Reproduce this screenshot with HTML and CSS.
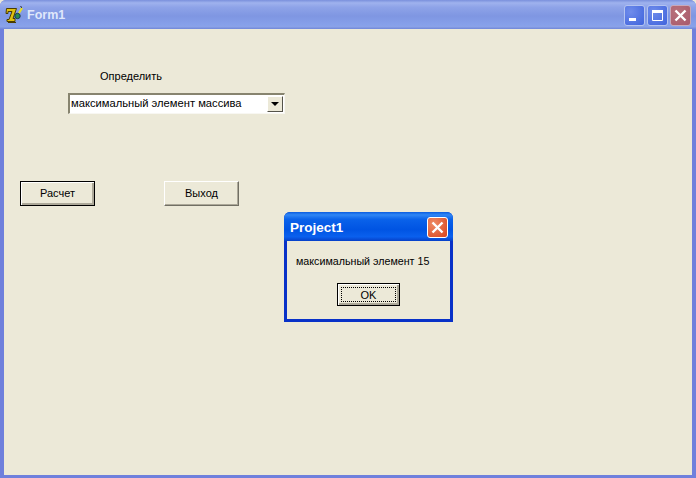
FILE: index.html
```html
<!DOCTYPE html>
<html lang="en">
<head>
  <meta charset="UTF-8">
  <title>Form1</title>
  <link rel="stylesheet" href="styles.css">
</head>
<body>

  <div class="window">
    <div class="titlebar">
      <svg class="app-icon" width="18" height="18" viewBox="0 0 18 18">
        <path d="M1.5 2.5h10l-3.500 10h2v3h-8v-2h2l3-8h-4v2h-2z" fill="#e0c010" stroke="#4a3c00" stroke-width="1"/>
        <path d="M3 16h8v1H3z" fill="#4a3c00"/>
        <circle cx="12.500" cy="10" r="2.700" fill="#2a8a50" stroke="#1c3a50" stroke-width="1"/>
        <path d="M14 7l3-5" stroke="#e8e020" stroke-width="2"/>
        <path d="M15.500 0.500l1.500 1" stroke="#101010" stroke-width="1"/>
      </svg>
      <span class="title-text">Form1</span>
      <div class="title-buttons">
        <div class="tbtn">
          <svg width="19" height="19" viewBox="0 0 19 19"><path d="M4 12h7v3H4z" fill="#fff"/></svg>
        </div>
        <div class="tbtn">
          <svg width="19" height="19" viewBox="0 0 19 19"><path d="M4.500 5.500h10v9h-10z" fill="none" stroke="#fff"/><path d="M4 4h11v3H4z" fill="#fff"/></svg>
        </div>
        <div class="tbtn tbtn-close">
          <svg width="19" height="19" viewBox="0 0 19 19"><path d="M4.500 4.500l10 10M14.500 4.500l-10 10" stroke="#fff" stroke-width="2.400"/></svg>
        </div>
      </div>
    </div>

    <div class="form">
      <div class="label">Определить</div>
      <div class="combo">
        <span class="combo-text">максимальный элемент массива</span>
        <div class="combo-arrow"><span class="arrow-down"></span></div>
      </div>
      <div class="buttons">
        <button class="btn btn-default">Расчет</button>
        <button class="btn">Выход</button>
      </div>
    </div>
  </div>

  <div class="dialog">
    <div class="dialog-title">
      <span class="dialog-title-text">Project1</span>
      <div class="dialog-close">
        <svg width="19" height="19" viewBox="0 0 19 19"><path d="M4.500 4.500l10 10M14.500 4.500l-10 10" stroke="#fff" stroke-width="2.400"/></svg>
      </div>
    </div>
    <div class="dialog-body">
      <p class="dialog-msg">максимальный элемент 15</p>
      <button class="btn-ok"><span class="ok-focus">OK</span></button>
    </div>
  </div>

</body>
</html>
```

FILE: styles.css
```css
* {
  margin: 0;
  padding: 0;
  box-sizing: border-box;
  font-family: "Liberation Sans", Arial, sans-serif;
}

body {
  width: 696px;
  height: 478px;
  overflow: hidden;
  position: relative;
  background: #ece9d8;
  font-size: 11px;
  color: #000;
}

.window {
  width: 696px;
  height: 478px;
  display: flex;
  flex-direction: column;
  background: #6f80dc;
  border-radius: 6px 6px 0 0;
  overflow: hidden;
}

.titlebar {
  height: 29px;
  flex: none;
  display: flex;
  align-items: center;
  padding: 1px 5px 0 5px;
  background: linear-gradient(180deg, #7a90dc 0%, #9fb2ee 10%, #8ea3e8 25%, #7f96e2 55%, #86a0ea 85%, #8aa2e8 92%, #6f86d8 100%);
}

.app-icon {
  flex: none;
  margin-right: 4px;
}

.title-text {
  color: #dfe7fb;
  font-size: 12.5px;
  font-weight: bold;
}

.title-buttons {
  margin-left: auto;
  display: flex;
  gap: 2px;
}

.tbtn {
  width: 21px;
  height: 21px;
  border: 1px solid #b4c3f0;
  border-radius: 3px;
  background: radial-gradient(circle at 30% 30%, #6f8ceb, #3f63dc);
  display: flex;
  align-items: center;
  justify-content: center;
}

.tbtn-close {
  background: radial-gradient(circle at 30% 30%, #b8707a, #a85a6c);
  border-color: #c8a8b8;
}

.form {
  flex: 1;
  margin: 0 4px 3px 4px;
  background: #ece9d8;
  padding-left: 16px;
}

.label {
  margin: 41px 0 0 80px;
  height: 13px;
  line-height: 13px;
}

.combo {
  margin: 10px 0 0 48px;
  width: 217px;
  height: 21px;
  display: flex;
  align-items: center;
  background: #fff;
  border-top: 2px solid #87846f;
  border-left: 2px solid #87846f;
  border-right: 1px solid #f8f7f2;
  border-bottom: 1px solid #f8f7f2;
}

.combo-text {
  flex: 1;
  padding: 0 0 2px 1px;
  font-size: 11.2px;
}

.combo-arrow {
  width: 16px;
  height: 16px;
  margin-right: 1px;
  background: #ece9d8;
  border: 1px solid;
  border-color: #fff #55534a #55534a #fff;
  display: flex;
  align-items: center;
  justify-content: center;
}

.arrow-down {
  border-left: 4px solid transparent;
  border-right: 4px solid transparent;
  border-top: 4px solid #000;
}

.buttons {
  margin-top: 67px;
  display: flex;
  gap: 69px;
}

.btn {
  width: 75px;
  height: 25px;
  padding-bottom: 2px;
  font-size: 11px;
  color: #000;
  background: #ece9d8;
  border: 1px solid;
  border-color: #fff #716f64 #716f64 #fff;
  box-shadow: inset -1px -1px 0 #aca899;
}

.btn-default {
  outline: 1px solid #000;
  outline-offset: -1px;
  box-shadow: inset 1px 1px 0 #fff, inset -2px -2px 0 #aca899;
}

.dialog {
  position: absolute;
  left: 284px;
  top: 212px;
  width: 169px;
  height: 110px;
  display: flex;
  flex-direction: column;
  background: #0831c8;
  border-radius: 6px 6px 0 0;
  padding: 0 3px 3px 3px;
}

.dialog-title {
  height: 29px;
  margin: 0 -3px;
  padding: 1px 5px 0 6px;
  flex: none;
  display: flex;
  align-items: center;
  justify-content: space-between;
  border-radius: 6px 6px 0 0;
  background: linear-gradient(180deg, #0a5ce0 0%, #2f86f5 10%, #0a62ea 25%, #0054e3 60%, #0a60ee 85%, #0640c8 100%);
}

.dialog-title-text {
  color: #fff;
  font-size: 13.5px;
  font-weight: bold;
  padding-top: 1px;
}

.dialog-close {
  width: 21px;
  height: 21px;
  border: 1px solid #fff;
  border-radius: 3px;
  background: radial-gradient(circle at 30% 30%, #ef8c66, #d8421c);
  display: flex;
  align-items: center;
  justify-content: center;
}

.dialog-body {
  flex: 1;
  background: #ece9d8;
  padding: 14px 0 0 9px;
}

.dialog-msg {
  font-size: 10.7px;
  line-height: 13px;
}

.btn-ok {
  display: block;
  width: 63px;
  height: 23px;
  margin: 15px 0 0 41px;
  background: #ece9d8;
  border: 1px solid #000;
  box-shadow: inset 1px 1px 0 #fff, inset -2px -2px 0 #aca899;
  font-size: 11px;
  padding: 3px;
}

.ok-focus {
  display: block;
  height: 100%;
  line-height: 15px;
  border: 1px dotted #000;
}
```
